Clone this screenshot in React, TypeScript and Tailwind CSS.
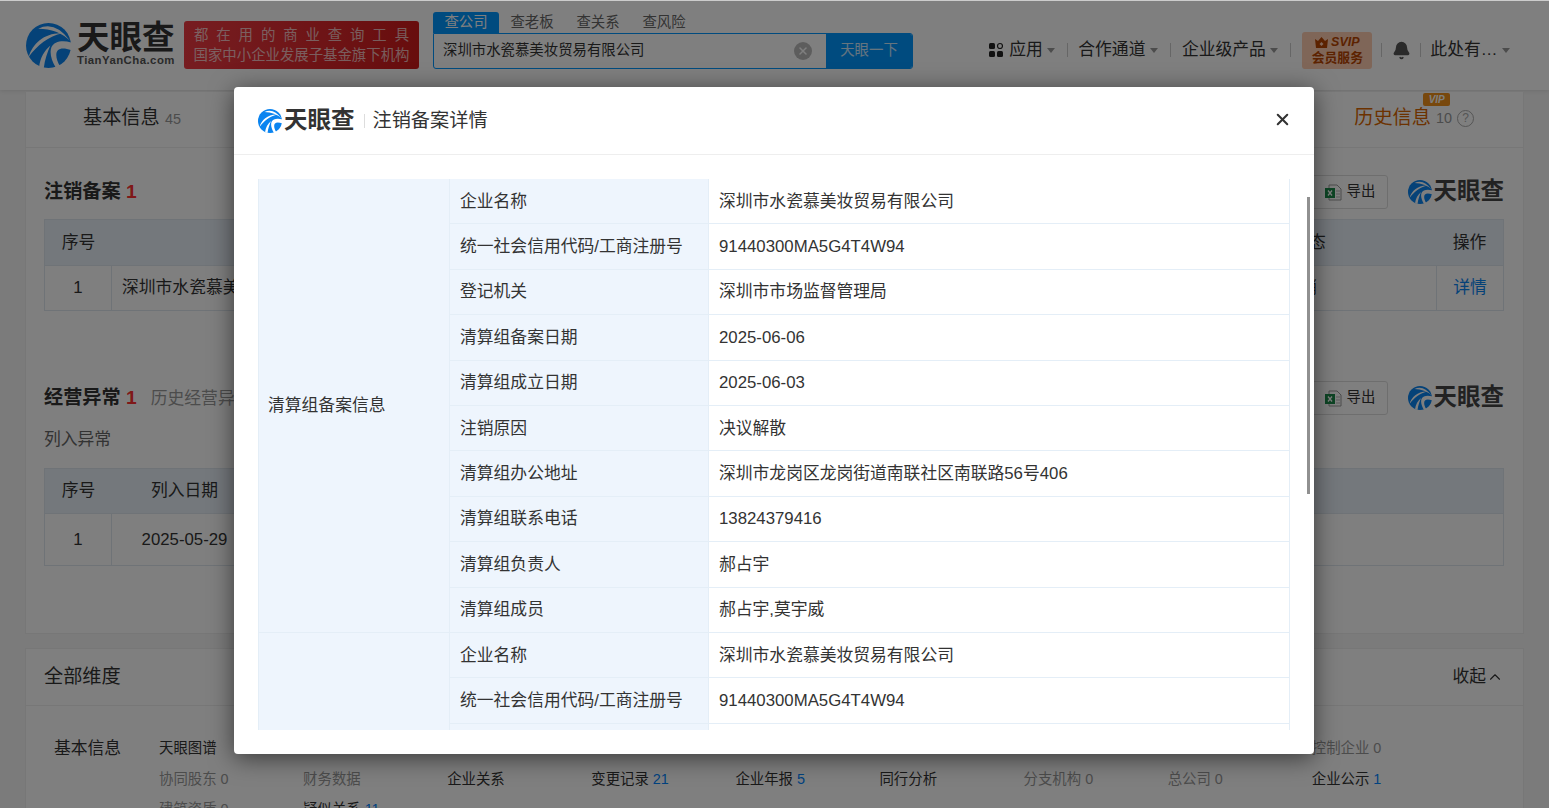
import { Bell, ChevronUp, X } from "lucide-react";

const FONT = "font-['Liberation_Sans','Noto_Sans_CJK_SC',sans-serif]";

function LogoMark({ size, color }: { size: number; color: string }) {
  return (
    <svg width={size} height={size} viewBox="0 0 48 48" className="shrink-0">
      <circle cx="24" cy="24" r="24" fill={color} />
      <path d="M13 6Q31 -3 47 19Q34 6 13 6Z" fill="#fff" />
      <path d="M3 36C7 22 20 10 39 11C24 14 12 24 3 36Z" fill="#fff" />
      <path d="M49 21C40 18 30 19 27 26C25 32 27 40 32 48L37 47C32 40 31 32 34 29C37 26 43 27 49 29Z" fill="#fff" />
      <path d="M14 47C15 37 20 29 26 24C23 31 20 39 19 48Z" fill="#fff" />
    </svg>
  );
}

function SmallLogo({ color, textColor }: { color: string; textColor: string }) {
  return (
    <div className="flex items-center">
      <LogoMark size={24} color={color} />
      <span className={`ml-[2px] text-[23.5px] leading-none font-bold ${textColor}`}>天眼查</span>
    </div>
  );
}

function Caret() {
  return <span className="ml-[4.5px] mt-[1px] w-0 h-0 border-x-[4.5px] border-x-transparent border-t-[5px] border-t-[#999]" />;
}

function Sep() {
  return <span className="block w-px h-[14px] bg-[#ccc]" />;
}

function ExportBtn() {
  return (
    <div className="flex items-center h-[34px] w-[90px] border border-[#ddd] rounded-[3px] pl-[26px] text-[14.4px] text-[#333]">
      <svg width="17" height="17" viewBox="0 0 17 17" className="shrink-0">
        <path d="M4 1h8l4 4v11H4z" fill="#fff" stroke="#999" />
        <path d="M11 7h4M11 10h4M11 13h4" stroke="#bbb" />
        <rect x="0" y="4" width="10" height="10" fill="#1d8a4a" />
        <path d="M3 6.5l4 5M7 6.5l-4 5" stroke="#fff" strokeWidth="1.3" />
      </svg>
      <span className="ml-[5px]">导出</span>
    </div>
  );
}

function Dim({ name, n }: { name: string; n: string }) {
  return (
    <span className="text-[#999]">
      {name} {n}
    </span>
  );
}

function Link({ name, n }: { name: string; n?: string }) {
  return (
    <span className="text-[#333]">
      {name} {n && <span className="text-[#0084ff]">{n}</span>}
    </span>
  );
}

function Page() {
  return (
    <div className="bg-[#f6f6f6] text-[#333]">
      {/* 顶部导航 */}
      <header className="h-[90px] bg-white border-t border-[#ccc] flex items-center pl-[26px] pr-[39px] shadow-[0_1px_4px_rgba(0,0,0,0.1)]">
        <LogoMark size={45} color="#0a84f0" />
        <div className="ml-[6px] -mt-[3px] flex flex-col w-[100px]">
          <span className="text-[32.5px] leading-[32px] font-bold text-[#333] whitespace-nowrap">天眼查</span>
          <span className="text-[11.4px] leading-[12px] font-bold tracking-[0.45px] text-[#555] whitespace-nowrap">TianYanCha.com</span>
        </div>
        <div className="ml-[7px] w-[235px] h-[48px] -mt-[1px] rounded-[3px] bg-gradient-to-r from-[#ee3a42] to-[#d01a1a] text-white/70 text-[14.4px] leading-[20px] flex flex-col items-center justify-center">
          <span className="tracking-[7.9px] -mr-[8px] whitespace-nowrap">都在用的商业查询工具</span>
          <span className="whitespace-nowrap">国家中小企业发展子基金旗下机构</span>
        </div>
        <div className="ml-[14px] w-[480px] -mt-[10px]">
          <div className="flex text-[14.4px] h-[21px] leading-[21px] text-[#666]">
            <span className="w-[66px] bg-[#0096ff] text-white text-center rounded-t-[3px]">查公司</span>
            <span className="w-[66px] text-center">查老板</span>
            <span className="w-[66px] text-center">查关系</span>
            <span className="w-[66px] text-center">查风险</span>
          </div>
          <div className="flex h-[36px] border border-[#0096ff] rounded-b-[3px] rounded-tr-[3px] overflow-hidden">
            <div className="flex-1 flex items-center pl-[9px] text-[14.4px] text-[#333]">深圳市水瓷慕美妆贸易有限公司</div>
            <div className="w-[18px] h-[18px] rounded-full bg-[#bbb] self-center mr-[14px] flex items-center justify-center">
              <X size={12} strokeWidth={3} className="text-white" />
            </div>
            <div className="w-[86px] bg-[#0096ff] text-white/80 text-[14.4px] flex items-center justify-center">天眼一下</div>
          </div>
        </div>
        <nav className="ml-auto mt-[9px] flex items-center text-[16.8px] text-[#333] whitespace-nowrap">
          <svg width="14" height="16" viewBox="0 0 14 16" className="mr-[6px]">
            <rect x="0" y="1" width="6" height="6" rx="1.5" fill="#222" />
            <circle cx="11" cy="4" r="2.5" fill="none" stroke="#222" strokeWidth="1.2" />
            <rect x="0" y="9" width="6" height="6" rx="1.5" fill="#222" />
            <rect x="8" y="9" width="6" height="6" rx="1.5" fill="#222" />
          </svg>
          <span>应用</span>
          <Caret />
          <span className="ml-[12px] mr-[10px]"><Sep /></span>
          <span>合作通道</span>
          <Caret />
          <span className="ml-[12px] mr-[11px]"><Sep /></span>
          <span>企业级产品</span>
          <Caret />
          <span className="ml-[12px] mr-[11px]"><Sep /></span>
          <div className="w-[70px] h-[37px] rounded-[3px] bg-[#ffcdb0] text-[#b84400] flex flex-col items-center justify-center font-bold">
            <span className="flex items-center text-[12.5px] leading-[15px] italic">
              <svg width="13" height="11" viewBox="0 0 13 11" className="mr-[3px]">
                <path d="M0 2l3 2 3.5-4 3.5 4 3-2-1 9H1zM6.5 5l-2 2 2 2 2-2z" fill="#b84400" fillRule="evenodd" />
              </svg>
              SVIP
            </span>
            <span className="text-[12.8px] leading-[16px]">会员服务</span>
          </div>
          <span className="ml-[9px] mr-[7px]"><Sep /></span>
          <Bell size={19} fill="#555" stroke="#555" className="mx-[3px]" />
          <span className="ml-[6px] mr-[9px]"><Sep /></span>
          <span>此处有…</span>
          <Caret />
        </nav>
      </header>

      <main className="ml-[25px] w-[1499px] mt-px">
        {/* 第一张卡片 */}
        <section className="bg-white border border-[#eee] h-[543px]">
          <div className="h-[56px] border-b border-[#eee] flex items-center justify-between pl-[57px] pr-[49px]">
            <span className="text-[19.2px] -mt-[2px] whitespace-nowrap">
              基本信息 <span className="text-[14.4px] text-[#999]">45</span>
            </span>
            <span className="flex items-center text-[19.2px] -mt-[2px] text-[#d96500] whitespace-nowrap relative">
              历史信息
              <span className="ml-[5px] text-[14.4px] text-[#999]">10</span>
              <span className="ml-[5px] w-[17px] h-[17px] rounded-full border border-[#aaa] text-[#aaa] text-[12px] flex items-center justify-center">?</span>
              <span className="absolute -top-[11px] left-[69px] w-[27px] h-[13px] rounded-[2px] bg-[#f0901a] text-white text-[10px] leading-[13px] font-bold italic text-center">VIP</span>
            </span>
          </div>

          <div className="pl-[18px] pr-[19px]">
            <div className="mt-[27px] h-[34px] flex items-center justify-between">
              <span className="text-[19.2px] font-bold whitespace-nowrap">
                注销备案 <span className="text-[#ff3030]">1</span>
              </span>
              <div className="flex items-center gap-[20px]">
                <ExportBtn />
                <SmallLogo color="#0a84f0" textColor="text-[#444]" />
              </div>
            </div>
            <div className="mt-[10px] border border-[#dfe7ee] text-[16.8px]">
              <div className="h-[46px] bg-[#e8f1f8] border-b border-[#dfe7ee] grid grid-cols-[67px_1fr_254px_67px] items-center text-center">
                <span>序号</span>
                <span />
                <span>状态</span>
                <span>操作</span>
              </div>
              <div className="h-[44px] grid grid-cols-[67px_1fr_254px_67px] items-center text-center">
                <span className="h-full flex items-center justify-center border-r border-[#dfe7ee]">1</span>
                <span className="text-left pl-[10px]">深圳市水瓷慕美妆贸易有限公司</span>
                <span className="pr-[18px]">注销</span>
                <span className="h-full flex items-center justify-center border-l border-[#dfe7ee] text-[#0a84f0]">详情</span>
              </div>
            </div>

            <div className="mt-[70px] h-[34px] flex items-center justify-between">
              <span className="text-[19.2px] font-bold whitespace-nowrap">
                经营异常 <span className="text-[#ff3030]">1</span>
                <span className="ml-[14px] text-[16.8px] font-normal text-[#999]">历史经营异常 0</span>
              </span>
              <div className="flex items-center gap-[20px]">
                <ExportBtn />
                <SmallLogo color="#0a84f0" textColor="text-[#444]" />
              </div>
            </div>
            <div className="mt-[13px] h-[24px] text-[16.8px] leading-[24px] text-[#666]">列入异常</div>
            <div className="mt-[16px] border border-[#dfe7ee] text-[16.8px]">
              <div className="h-[45px] bg-[#e8f1f8] border-b border-[#dfe7ee] grid grid-cols-[67px_145px_1fr] items-center text-center">
                <span>序号</span>
                <span>列入日期</span>
                <span />
              </div>
              <div className="h-[51px] grid grid-cols-[67px_145px_1fr] items-center text-center">
                <span className="h-full flex items-center justify-center border-r border-[#dfe7ee]">1</span>
                <span>2025-05-29</span>
                <span />
              </div>
            </div>
          </div>
        </section>

        {/* 全部维度 */}
        <section className="mt-[14px] bg-white border border-[#eee] h-[300px]">
          <div className="h-[57px] border-b border-[#eee] flex items-center justify-between pl-[18px] pr-[19px]">
            <span className="text-[19.2px]">全部维度</span>
            <span className="flex items-center text-[16.8px]">
              收起
              <ChevronUp size={18} strokeWidth={1.5} />
            </span>
          </div>
          <div className="flex pt-[30px] pl-[28px]">
            <span className="w-[105px] mt-[1px] text-[16.8px] leading-[24px] shrink-0">基本信息</span>
            <div className="grid grid-cols-[repeat(9,144.1px)] auto-rows-[30.6px] text-[14.4px] leading-[24px] whitespace-nowrap">
              <Link name="天眼图谱" />
              <span className="col-start-9"><Dim name="控制企业" n="0" /></span>
              <Dim name="协同股东" n="0" />
              <span className="text-[#999]">财务数据</span>
              <Link name="企业关系" />
              <Link name="变更记录" n="21" />
              <Link name="企业年报" n="5" />
              <Link name="同行分析" />
              <Dim name="分支机构" n="0" />
              <Dim name="总公司" n="0" />
              <Link name="企业公示" n="1" />
              <Dim name="建筑资质" n="0" />
              <Link name="疑似关系" n="11" />
            </div>
          </div>
        </section>
      </main>
    </div>
  );
}

const ROWS_A: [string, string][] = [
  ["企业名称", "深圳市水瓷慕美妆贸易有限公司"],
  ["统一社会信用代码/工商注册号", "91440300MA5G4T4W94"],
  ["登记机关", "深圳市市场监督管理局"],
  ["清算组备案日期", "2025-06-06"],
  ["清算组成立日期", "2025-06-03"],
  ["注销原因", "决议解散"],
  ["清算组办公地址", "深圳市龙岗区龙岗街道南联社区南联路56号406"],
  ["清算组联系电话", "13824379416"],
  ["清算组负责人", "郝占宇"],
  ["清算组成员", "郝占宇,莫宇威"],
];

function DetailModal() {
  return (
    <div className="relative w-[1080px] h-[667px] bg-white rounded-[4px] shadow-[0_4px_24px_rgba(0,0,0,0.55)] text-[#333]">
      <div className="h-[68px] border-b border-[#eee] flex items-center pl-[24px] pr-[22px]">
        <SmallLogo color="#0a84f0" textColor="text-[#333]" />
        <span className="ml-[9px] w-px h-[14px] bg-[#ddd]" />
        <span className="ml-[8px] mt-[1px] text-[19.2px]">注销备案详情</span>
        <button className="ml-auto -mt-[2px]">
          <X size={19} strokeWidth={2.6} className="text-[#333]" />
        </button>
      </div>

      <div className="mt-[24px] mx-[24px] h-[551px] overflow-hidden border-x border-[#e4eef7]">
        <div className="grid grid-cols-[191px_259px_1fr] auto-rows-[45.4px] text-[16.8px]">
          <div className="row-span-10 bg-[#eef5fd] border-b border-r border-[#e4eef7] flex items-center pl-[9px]">清算组备案信息</div>
          {ROWS_A.map(([label, value]) => (
            <div key={label} className="contents">
              <div className="bg-[#eef5fd] border-b border-r border-[#e4eef7] flex items-center pl-[10px] whitespace-nowrap">{label}</div>
              <div className="border-b border-[#e4eef7] flex items-center pl-[10px]">{value}</div>
            </div>
          ))}
          <div className="row-span-10 bg-[#eef5fd] border-r border-[#e4eef7]" />
          {ROWS_A.slice(0, 3).map(([label, value]) => (
            <div key={label + "2"} className="contents">
              <div className="bg-[#eef5fd] border-b border-r border-[#e4eef7] flex items-center pl-[10px] whitespace-nowrap">{label}</div>
              <div className="border-b border-[#e4eef7] flex items-center pl-[10px]">{value}</div>
            </div>
          ))}
        </div>
      </div>

      {/* 滚动条 */}
      <div className="absolute left-[1073px] top-[110px] w-[3px] h-[297px] bg-[#909090]" />
    </div>
  );
}

export default function App() {
  return (
    <div className={`relative h-[808px] overflow-hidden ${FONT}`}>
      <Page />
      <div className="absolute inset-x-0 top-px bottom-0 bg-black/50 pt-[86px] pl-[234px]">
        <DetailModal />
      </div>
    </div>
  );
}
